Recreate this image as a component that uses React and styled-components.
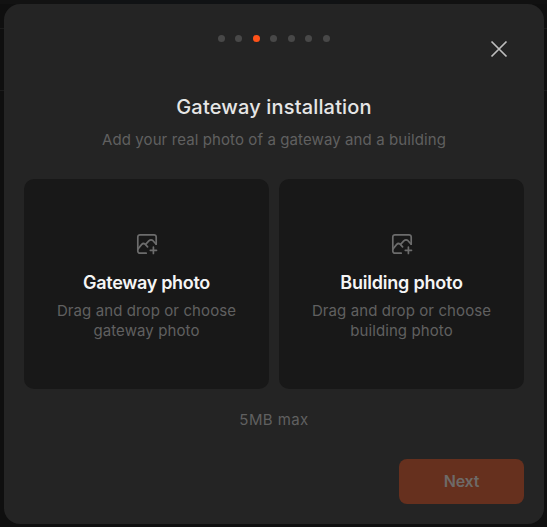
import React from "react";
import styled, { createGlobalStyle } from "styled-components";

const GlobalStyle = createGlobalStyle`
  *, *::before, *::after { box-sizing: border-box; }
  html, body { margin: 0; background: #111; }
  body { font-family: Inter, "Liberation Sans", sans-serif; }
  h1, h2, p { margin: 0; font-weight: inherit; }
  button { font: inherit; border: 0; padding: 0; cursor: pointer; }
`;

const Backdrop = styled.main`
  width: 547px;
  height: 527px;
  padding: 4px 3px 3px 4px;
  overflow: hidden;
  background:
    linear-gradient(#1b1b1b, #1b1b1b) 0 28px / 100% 1px no-repeat,
    linear-gradient(#1b1b1b, #1b1b1b) 0 90px / 100% 1px no-repeat,
    linear-gradient(90deg, #121212 80px, #101214 80px, #101214 340px, #111 340px) 0 0 / 100% 4px no-repeat,
    #0f0f0f;
`;

const Dialog = styled.section`
  position: relative;
  display: flex;
  flex-direction: column;
  height: 520px;
  padding: 31px 20px 20px;
  border-radius: 16px;
  background: #242424;
`;

const Steps = styled.div`
  display: flex;
  justify-content: center;
  gap: 10.5px;
  height: 7px;
  margin-right: 0.4px;
`;

const Dot = styled.span`
  width: 7px;
  height: 7px;
  border-radius: 50%;
  background: ${({ $active }) => ($active ? "#ff5219" : "#484848")};
`;

const CloseButton = styled.button`
  position: absolute;
  top: 33px;
  right: 33px;
  width: 24px;
  height: 24px;
  background: none;
  color: #bdbdbd;
  svg { display: block; }
`;

const Title = styled.h1`
  margin-top: 49px;
  font-size: 20px;
  font-weight: 500;
  line-height: 32px;
  letter-spacing: 0.16px;
  text-align: center;
  color: #e6e6e6;
`;

const Muted = styled.p`
  margin-top: ${({ $top }) => $top};
  font-size: 15px;
  line-height: 20px;
  letter-spacing: ${({ $spacing }) => $spacing || "0.1px"};
  text-align: center;
  color: #606060;
`;

const Uploads = styled.div`
  display: grid;
  grid-template-columns: 1fr 1fr;
  gap: 10px;
  margin-top: 29px;
`;

const UploadCard = styled.button`
  display: flex;
  flex-direction: column;
  align-items: center;
  height: 210px;
  padding-top: 53px;
  border-radius: 10px;
  background: #181818;
  svg { display: block; flex: none; }
`;

const CardTitle = styled.h2`
  margin-top: 15px;
  font-size: 18px;
  font-weight: 600;
  line-height: 24px;
  letter-spacing: ${({ $spacing }) => $spacing};
  color: #f5f5f5;
`;

const Footer = styled.footer`
  display: flex;
  justify-content: flex-end;
  margin-top: auto;
`;

const NextButton = styled.button`
  width: 125px;
  height: 45px;
  border-radius: 8px;
  background: #66301e;
  color: #6e6a68;
  font-size: 16px;
  font-weight: 600;
  line-height: 45px;
  letter-spacing: -0.2px;
`;

const CloseIcon = () => (
  <svg width="24" height="24" viewBox="0 0 24 24" fill="none" stroke="currentColor" strokeWidth="1.7">
    <path d="M4.5 4.5 19.5 19.5M19.5 4.5 4.5 19.5" />
  </svg>
);

const PhotoIcon = () => (
  <svg width="24" height="24" viewBox="0 0 24 24" fill="none" stroke="#6c6c6c" strokeWidth="1.7" strokeLinecap="round" strokeLinejoin="round">
    <path d="M11.2 21.2H5A2.2 2.2 0 0 1 2.8 19V5A2.2 2.2 0 0 1 5 2.8H19A2.2 2.2 0 0 1 21.2 5V12.2" />
    <path d="M2.8 17.2 6.5 12.6Q8.3 10.6 10.1 12.2L12.6 14.8" />
    <path d="M10.6 12.4 13.8 8.9Q16 6.8 18 8.7L21.2 12.2" />
    <path d="M18.4 15.2V21.4M15.3 18.3H21.5" />
  </svg>
);

const uploads = [
  { title: "Gateway photo", lines: ["Drag and drop or choose", "gateway photo"], spacing: "-0.32px" },
  { title: "Building photo", lines: ["Drag and drop or choose", "building photo"], spacing: "-0.22px" },
];

export default function App() {
  return (
    <>
      <GlobalStyle />
      <Backdrop>
        <Dialog role="dialog" aria-label="Gateway installation">
          <Steps>
            {Array.from({ length: 7 }, (_, i) => <Dot key={i} $active={i === 2} />)}
          </Steps>
          <CloseButton aria-label="Close"><CloseIcon /></CloseButton>
          <Title>Gateway installation</Title>
          <Muted $top="7px">Add your real photo of a gateway and a building</Muted>
          <Uploads>
            {uploads.map(({ title, lines, spacing }) => (
              <UploadCard key={title}>
                <PhotoIcon />
                <CardTitle $spacing={spacing}>{title}</CardTitle>
                <Muted $top="6px">{lines[0]}<br />{lines[1]}</Muted>
              </UploadCard>
            ))}
          </Uploads>
          <Muted $top="21px" $spacing="0.4px">5MB max</Muted>
          <Footer><NextButton>Next</NextButton></Footer>
        </Dialog>
      </Backdrop>
    </>
  );
}
